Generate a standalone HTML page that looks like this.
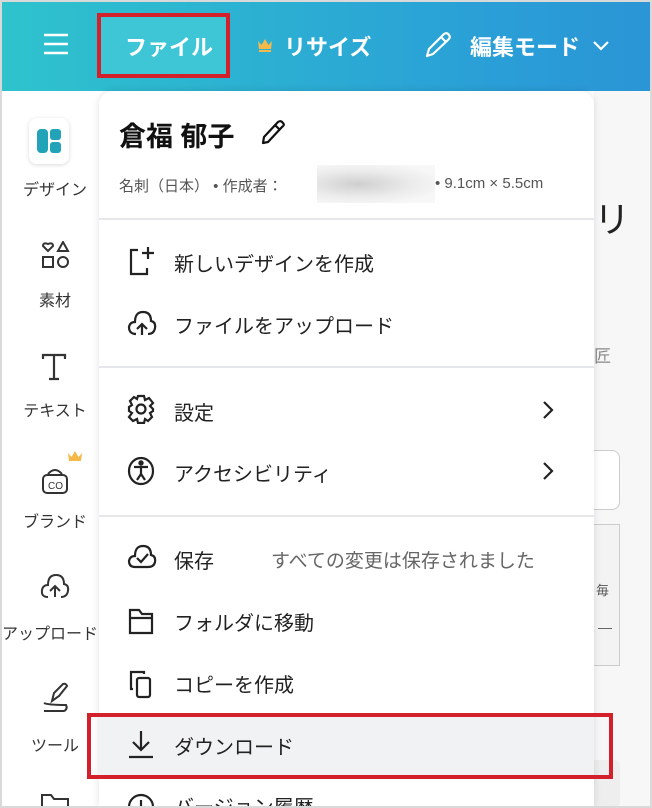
<!DOCTYPE html>
<html><head><meta charset="utf-8"><style>
*{margin:0;padding:0;box-sizing:border-box}
html,body{width:652px;height:808px;overflow:hidden}
body{background:#fff;font-family:"Liberation Sans","Noto Sans CJK JP",sans-serif;position:relative;color:#1b1b1f}
.frame{position:absolute;inset:0;border:2px solid #d9d9d9;pointer-events:none;z-index:20}
.hdr{position:absolute;left:0;top:0;width:652px;height:91px;background:linear-gradient(90deg,#2ec3cd,#2a9fd7 75%,#2b95d6)}
.hdr .t{position:absolute;color:#fff;font-size:22px;font-weight:bold;top:30px}
.abs{position:absolute}
.side{position:absolute;left:0;top:91px;width:100px;height:717px;background:#fff;overflow:hidden}
.lab{position:absolute;font-size:16px;color:#333;width:110px;text-align:center}
.menu{position:absolute;left:99px;top:91px;width:495px;height:717px;background:#fff;border-radius:14px 14px 0 0;box-shadow:0 0 8px rgba(0,0,0,.12);z-index:5;overflow:hidden}
.it{position:absolute;left:75px;font-size:20px;color:#222}
.ic{position:absolute;left:28px}
.div{position:absolute;left:0;width:495px;height:2px;background:#e6e7ea}
.chev{position:absolute;left:443px}
</style></head><body>
<div class="hdr">
 <svg class="abs" style="left:43px;top:33px" width="26" height="22"><path d="M1 2H25M1 11H25M1 20H25" stroke="#fff" stroke-width="2.4"/></svg>
 <div class="abs" style="left:99px;top:15px;width:129px;height:61px;background:#3ec6d6"></div>
 <div class="t" style="left:125px">ファイル</div>
 <svg class="abs" style="left:257px;top:38px" width="16" height="14"><path d="M1 3L4.5 7L8 1L11.5 7L15 3L14 11H2Z" fill="#f5b94a"/><rect x="2" y="12" width="12" height="2" fill="#f5b94a"/></svg>
 <div class="t" style="left:284px">リサイズ</div>
 <svg class="abs" style="left:423px;top:30px" width="30" height="30"><path d="M4 26L6 19L21 4Q24 2 26 5Q28 7 25 10L10 24Z M18 7L23 12" fill="none" stroke="#fff" stroke-width="2.2" stroke-linejoin="round"/></svg>
 <div class="t" style="left:470px">編集モード</div>
 <svg class="abs" style="left:592px;top:40px" width="18" height="12"><path d="M2 2L9 9L16 2" fill="none" stroke="#fff" stroke-width="2.2"/></svg>
 <div class="abs" style="left:97px;top:13px;width:133px;height:65px;border:4px solid #d3202a"></div>
</div>
<div class="side">
 <div class="abs" style="left:29px;top:27px;width:40px;height:46px;border-radius:8px;background:#fff;box-shadow:0 1px 4px rgba(0,0,0,.15)"></div>
 <svg class="abs" style="left:36px;top:37px" width="26" height="26"><rect x="1" y="1" width="11" height="24" rx="4" fill="#22a3b8"/><rect x="14" y="1" width="11" height="11" rx="3" fill="#22a3b8"/><rect x="14" y="14" width="11" height="11" rx="3" fill="#22a3b8"/></svg>
 <div class="lab" style="left:0;top:85px">デザイン</div>
 <svg class="abs" style="left:41px;top:150px" width="30" height="30" fill="none" stroke="#333" stroke-width="2"><path d="M7 10L2 5Q2 1 7 3Q12 1 12 5Z"/><path d="M22 1L27 10H17Z"/><rect x="2" y="16" width="10" height="10"/><circle cx="22" cy="21" r="5"/></svg>
 <div class="lab" style="left:0;top:196px">素材</div>
 <svg class="abs" style="left:41px;top:262px" width="26" height="28" fill="none" stroke="#333" stroke-width="2.2"><path d="M2 6V2H24V6M13 2V26M8 26H18"/></svg>
 <div class="lab" style="left:0;top:306px">テキスト</div>
 <svg class="abs" style="left:40px;top:370px" width="30" height="36" fill="none" stroke="#333" stroke-width="2"><path d="M8 13Q15 5 22 13"/><rect x="3" y="14" width="24" height="18" rx="4"/><text x="8" y="28" font-size="10" fill="#333" stroke="none" font-family="Liberation Sans">CO</text></svg>
 <svg class="abs" style="left:67px;top:359px" width="16" height="14"><path d="M1 3L4.5 7L8 1L11.5 7L15 3L14 11H2Z" fill="#f5b94a"/></svg>
 <div class="lab" style="left:0;top:417px">ブランド</div>
 <svg class="abs" style="left:39px;top:480px" width="32" height="30" fill="none" stroke="#333" stroke-width="2"><path d="M9 26Q2 26 3 19Q4 14 9 14Q9 4 17 4Q25 4 25 13Q30 14 29 20Q28 26 22 26"/><path d="M16 26V15M11 20L16 15L21 20"/></svg>
 <div class="lab" style="left:-5px;top:529px">アップロード</div>
 <svg class="abs" style="left:40px;top:590px" width="30" height="34" fill="none" stroke="#333" stroke-width="2"><path d="M12 20L14 12L23 3Q26 2 27 5L19 15Z"/><path d="M4 22Q8 24 26 24Q28 28 24 30H4"/></svg>
 <div class="lab" style="left:0;top:641px">ツール</div>
 <svg class="abs" style="left:40px;top:700px" width="30" height="20" fill="none" stroke="#333" stroke-width="2"><path d="M2 18V4H11L14 8H28V18"/></svg>
</div>
<div class="abs" style="left:594px;top:91px;width:58px;height:717px;background:#f7f7f8"></div>
<div class="abs" style="left:594px;top:191px;font-size:36px;color:#222">リ</div>
<div class="abs" style="left:594px;top:342px;font-size:17px;color:#888">匠</div>
<div class="abs" style="left:560px;top:450px;width:60px;height:60px;border:1px solid #ccc;border-radius:8px;background:#fff"></div>
<div class="abs" style="left:560px;top:524px;width:60px;height:142px;border:1px solid #ccc;background:#f3f3f3"></div>
<div class="abs" style="left:596px;top:580px;font-size:13px;color:#555">毎</div>
<div class="abs" style="left:598px;top:628px;width:14px;height:1px;background:#666"></div>
<div class="abs" style="left:560px;top:760px;width:60px;height:48px;background:#eee;border-radius:6px"></div>
<div class="menu">
 <div class="abs" style="left:20px;top:24px;font-size:27px;font-weight:bold;color:#111">倉福 郁子</div>
 <svg class="abs" style="left:160px;top:27px" width="28" height="28" fill="none" stroke="#111" stroke-width="2.2" stroke-linejoin="round"><path d="M4 25L5 19L19 4Q22 2 24 5Q26 7 23 9L9 24Z M16 7L21 12"/></svg>
 <div class="abs" style="left:20px;top:84px;font-size:15px;color:#555">名刺（日本） • 作成者：</div>
 <div class="abs" style="left:218px;top:74px;width:118px;height:38px;background:radial-gradient(ellipse at 35% 50%,#cfcfcf,#ececec 50%,#f7f7f7 80%)"></div>
 <div class="abs" style="left:336px;top:84px;font-size:15px;color:#555">• 9.1cm × 5.5cm</div>
 <div class="div" style="top:127px"></div>
 <svg class="ic" style="top:155px" width="28" height="30" fill="none" stroke="#222" stroke-width="2.2"><path d="M11 4H4V28H20V22M21 1V13M15 7H27"/></svg>
 <div class="it" style="top:157px">新しいデザインを作成</div>
 <svg class="ic" style="top:218px" width="30" height="28" fill="none" stroke="#222" stroke-width="2.2"><path d="M9 25Q2 25 2 18Q3 13 8 13Q8 3 16 3Q24 3 24 12Q29 13 28 19Q27 25 21 25"/><path d="M15 26V15M10 20L15 15L20 20"/></svg>
 <div class="it" style="top:219px">ファイルをアップロード</div>
 <div class="div" style="top:275px"></div>
 <svg class="ic" style="top:303px" width="28" height="30" fill="none" stroke="#222" stroke-width="2.2"><path d="M11 2H17L18 6L22 4L26 9L23 12L26 15V17L23 19L25 23L21 27L18 25L17 29H11L10 25L6 27L2 23L5 19L2 17V13L5 11L3 7L7 3L10 5Z"/><circle cx="14" cy="15" r="4.5"/></svg>
 <div class="it" style="top:306px">設定</div>
 <svg class="chev" style="top:309px" width="12" height="20" fill="none" stroke="#222" stroke-width="2.2"><path d="M2 2L10 10L2 18"/></svg>
 <svg class="ic" style="top:365px" width="28" height="30" fill="none" stroke="#222" stroke-width="2.2"><ellipse cx="14" cy="15" rx="12" ry="13"/><circle cx="14" cy="7" r="1.6" fill="#222"/><path d="M7 11H21M14 11V18L10 24M14 18L18 24"/></svg>
 <div class="it" style="top:367px">アクセシビリティ</div>
 <svg class="chev" style="top:370px" width="12" height="20" fill="none" stroke="#222" stroke-width="2.2"><path d="M2 2L10 10L2 18"/></svg>
 <div class="div" style="top:424px"></div>
 <svg class="ic" style="top:452px" width="30" height="28" fill="none" stroke="#222" stroke-width="2.2"><path d="M8 24Q2 24 2 18Q3 13 8 13Q8 3 16 3Q24 3 24 12Q29 13 28 19Q27 24 21 24Z"/><path d="M10 15L14 19L21 11"/></svg>
 <div class="it" style="top:454px">保存</div>
 <div class="abs" style="left:172px;top:455px;font-size:19px;color:#666">すべての変更は保存されました</div>
 <svg class="ic" style="top:515px" width="28" height="30" fill="none" stroke="#222" stroke-width="2.2"><path d="M3 4H12L15 8H25V27H3Z M3 12H25"/></svg>
 <div class="it" style="top:516px">フォルダに移動</div>
 <svg class="ic" style="top:578px" width="28" height="30" fill="none" stroke="#222" stroke-width="2.2"><path d="M6 20H4V3H17V5"/><rect x="10" y="9" width="13" height="19" rx="2"/></svg>
 <div class="it" style="top:578px">コピーを作成</div>
 <div class="abs" style="left:-12px;top:622px;width:525px;height:65px;background:#f1f2f4"></div>
 <svg class="ic" style="top:638px" width="28" height="30" fill="none" stroke="#222" stroke-width="2.2"><path d="M14 2V20M6 13L14 21L22 13M2 28H26"/></svg>
 <div class="it" style="top:640px">ダウンロード</div>
 <svg class="ic" style="top:702px" width="28" height="28" fill="none" stroke="#222" stroke-width="2.2"><circle cx="14" cy="14" r="12"/><path d="M14 7V14"/></svg>
 <div class="it" style="top:700px">バージョン履歴</div>
</div>
<div class="abs" style="left:87px;top:713px;width:526px;height:66px;border:4px solid #d3202a;z-index:10"></div>
<div class="frame"></div>
</body></html>
